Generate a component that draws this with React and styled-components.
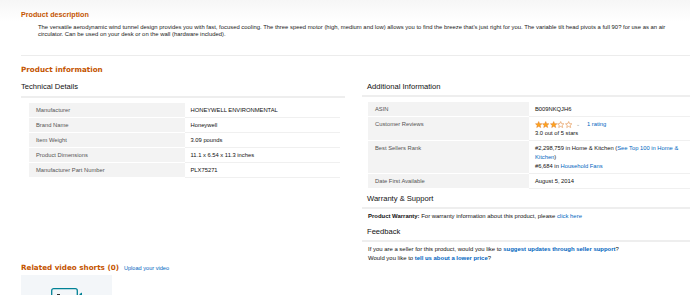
import React from "react";
import styled, { createGlobalStyle } from "styled-components";

const Global = createGlobalStyle`
  html, body { margin: 0; padding: 0; background: #fff; }
  body { font-family: "Liberation Sans", Arial, sans-serif; color: #111; overflow: hidden; }
  * { box-sizing: border-box; }
`;

const Page = styled.div`
  width: 690px;
  padding: 10px 0 0 21px;
  background: linear-gradient(to bottom, #f6f6f6 0px, #ffffff 22px);
`;

const OrangeTitle = styled.h2`
  margin: 0;
  font-family: ${(p) => (p.$alt ? '"DejaVu Sans", Verdana, sans-serif' : '"Liberation Sans", Arial, sans-serif')};
  font-size: 7.2px;
  line-height: 9px;
  font-weight: bold;
  color: #c45500;
  display: flex;
  align-items: baseline;
  gap: 5px;
`;

const Description = styled.p`
  margin: 5px 0 0 0;
  padding: 0 6px 0 17px;
  font-size: 5.9px;
  line-height: 6.7px;
  color: #222;
`;

const Divider = styled.hr`
  margin: ${(p) => p.$m || "0"};
  border: 0;
  height: ${(p) => p.$h || 1}px;
  background: ${(p) => p.$c || "#e7e7e7"};
`;

const Columns = styled.div`
  display: grid;
  grid-template-columns: 324px 345px;
  column-gap: 0;
  margin-top: 8px;
`;

const Column = styled.div`
  display: flex;
  flex-direction: column;
  padding-left: ${(p) => p.$pl || 0}px;
`;

const SubTitle = styled.h3`
  margin: ${(p) => p.$m || "0"};
  padding-left: ${(p) => p.$pl || 0}px;
  font-size: 7.6px;
  line-height: 10px;
  font-weight: normal;
  color: #111;
`;

const Table = styled.table`
  border-collapse: collapse;
  width: ${(p) => p.$w}px;
  margin: 5.5px 0 0 ${(p) => p.$ml}px;
  font-size: 5.8px;
  line-height: 9px;
  table-layout: fixed;
`;

const Th = styled.th`
  background: #f3f3f3;
  color: #555;
  font-weight: normal;
  text-align: left;
  vertical-align: top;
  padding: 3px 6px 2px 7px;
  border-bottom: 1px solid #fff;
`;

const Td = styled.td`
  background: #fff;
  color: #111;
  vertical-align: top;
  padding: 3px 6px 2px 6px;
  border-bottom: 1px solid #f0f0f0;
`;

const Link = styled.a`
  color: #0066c0;
  font-weight: ${(p) => (p.$bold ? "bold" : "normal")};
  text-decoration: none;
`;

const StarsRow = styled.div`
  display: flex;
  align-items: center;
  height: 9px;
`;

const Stars = styled.span`
  display: inline-flex;
  gap: 0px;
`;

const Chevron = styled.span`
  color: #999;
  font-size: 5px;
  margin: 0 7px 0 4px;
`;

const InfoText = styled.div`
  padding-left: 6px;
  margin: ${(p) => p.$m || "0"};
  font-size: 5.95px;
  line-height: 9px;
  color: #111;
`;

const Bold = styled.b`
  font-weight: bold;
`;

const RelatedHead = styled.div`
  margin-top: 0px;
`;

const UploadLink = styled.a`
  font-family: "Liberation Sans", Arial, sans-serif;
  font-size: 5.6px;
  font-weight: normal;
  color: #0066c0;
  text-decoration: none;
`;

const VideoBox = styled.div`
  width: 91px;
  height: 60px;
  margin-top: 2px;
  background: #f3f6f9;
  display: flex;
  justify-content: center;
  padding-top: 13px;
`;

const Star = ({ filled }) => (
  <svg width="7.4" height="7.4" viewBox="0 0 24 24">
    <path
      d="M12 1.8l3 6.8 7.3.6-5.6 4.8 1.7 7.2L12 17.4l-6.4 3.8 1.7-7.2-5.6-4.8 7.3-.6z"
      fill={filled ? "#ffa41c" : "#fff"}
      stroke="#de7921"
      strokeWidth="1.6"
      strokeLinejoin="round"
    />
  </svg>
);

const VideoIcon = () => (
  <svg width="32" height="24" viewBox="0 0 32 24">
    <rect x="0.7" y="0.7" width="25.6" height="20" rx="2" fill="none" stroke="#008296" strokeWidth="1.3" />
    <path d="M28.5 6 L31 4.5 L31 16 L28.5 14.5 Z" fill="#008296" />
    <rect x="6" y="6" width="3" height="1.3" fill="#333" />
  </svg>
);

const techRows = [
  ["Manufacturer", "HONEYWELL ENVIRONMENTAL"],
  ["Brand Name", "Honeywell"],
  ["Item Weight", "3.09 pounds"],
  ["Product Dimensions", "11.1 x 6.54 x 11.3 inches"],
  ["Manufacturer Part Number", "PLX75271"],
];

export default function App() {
  return (
    <Page>
      <Global />
      <OrangeTitle>Product description</OrangeTitle>
      <Description>
        The versatile aerodynamic wind tunnel design provides you with fast, focused cooling. The three speed motor (high, medium and low) allows you to find the breeze that's just right for you. The variable tilt head pivots a full 90? for use as an air circulator. Can be used on your desk or on the wall (hardware included).
      </Description>
      <Divider $m="18px 0 0 0" $c="#ececec" />
      <OrangeTitle $alt style={{ marginTop: "8.5px" }}>Product information</OrangeTitle>
      <Columns>
        <Column>
          <SubTitle>Technical Details</SubTitle>
          <Divider $m="4px 0 0 0" $h={2} $c="#eeeeee" />
          <Table $w={311} $ml={8}>
            <tbody>
              {techRows.map(([k, v]) => (
                <tr key={k}>
                  <Th>{k}</Th>
                  <Td>{v}</Td>
                </tr>
              ))}
            </tbody>
          </Table>
        </Column>
        <Column $pl={17}>
          <SubTitle $pl={5}>Additional Information</SubTitle>
          <Divider $m="3px 0 0 0" $h={2} $c="#eeeeee" />
          <Table $w={322} $ml={6}>
            <tbody>
              <tr>
                <Th>ASIN</Th>
                <Td>B009NKQJH6</Td>
              </tr>
              <tr>
                <Th>Customer Reviews</Th>
                <Td>
                  <StarsRow>
                    <Stars>
                      <Star filled />
                      <Star filled />
                      <Star filled />
                      <Star />
                      <Star />
                    </Stars>
                    <Chevron>⌄</Chevron>
                    <Link>1 rating</Link>
                  </StarsRow>
                  3.0 out of 5 stars
                </Td>
              </tr>
              <tr>
                <Th>Best Sellers Rank</Th>
                <Td>
                  #2,298,759 in Home &amp; Kitchen (<Link>See Top 100 in Home &amp; Kitchen</Link>)
                  <br />
                  #6,684 in <Link>Household Fans</Link>
                </Td>
              </tr>
              <tr>
                <Th>Date First Available</Th>
                <Td>August 5, 2014</Td>
              </tr>
            </tbody>
          </Table>
          <SubTitle $pl={5} $m="5px 0 0 0">Warranty &amp; Support</SubTitle>
          <Divider $m="2.5px 0 0 0" $h={2} $c="#eeeeee" />
          <InfoText $m="3px 0 0 0">
            <Bold>Product Warranty:</Bold> For warranty information about this product, please <Link>click here</Link>
          </InfoText>
          <SubTitle $pl={5} $m="6px 0 0 0">Feedback</SubTitle>
          <Divider $m="3px 0 0 0" $h={2} $c="#eeeeee" />
          <InfoText $m="3px 0 0 0">
            If you are a seller for this product, would you like to <Link $bold>suggest updates through seller support</Link>?
            <br />
            Would you like to <Link $bold>tell us about a lower price</Link>?
          </InfoText>
        </Column>
      </Columns>
      <RelatedHead>
        <OrangeTitle $alt>
          Related video shorts (0) <UploadLink>Upload your video</UploadLink>
        </OrangeTitle>
        <VideoBox>
          <VideoIcon />
        </VideoBox>
      </RelatedHead>
    </Page>
  );
}
